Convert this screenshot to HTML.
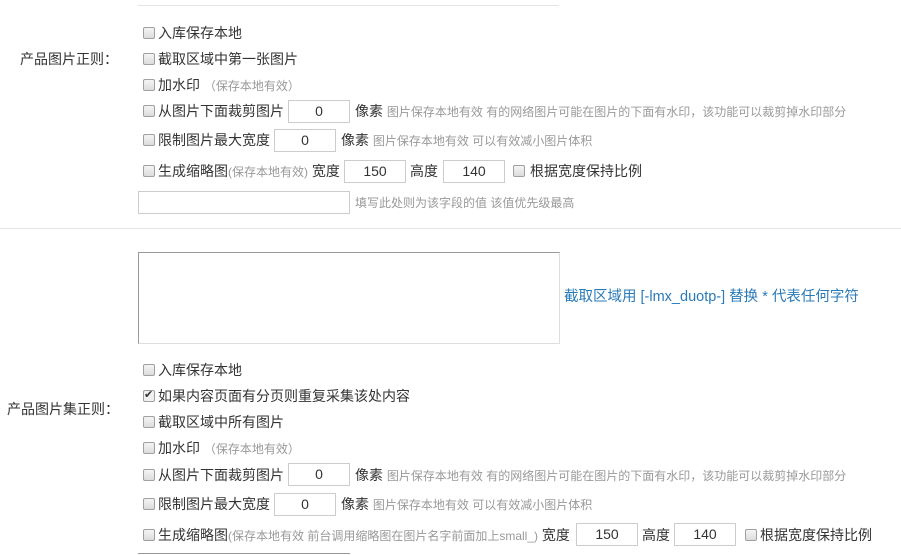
<!DOCTYPE html>
<html><head><meta charset="utf-8"><style>
body{margin:0;width:901px;height:555px;background:#fff;overflow:hidden;position:relative;font-family:"Liberation Sans","Microsoft YaHei","Noto Sans CJK SC",sans-serif;font-size:14px;color:#333}
.a{position:absolute;white-space:nowrap;line-height:16px}
.cb{position:absolute;width:10px;height:10px;border:1px solid #a0a0a0;border-radius:2px;background:linear-gradient(#f4f4f4,#dcdcdc)}
.in{position:absolute;height:23px;border:1px solid #ccc;box-sizing:border-box;text-align:center;line-height:21px;font-size:14px;color:#333;background:#fff}
.h{color:#999;font-size:12px}
.bl{color:#2a7ab8;font-size:14.5px}
</style></head><body>
<div style="position:absolute;left:138px;top:5px;width:421px;height:1px;background:#e4e4e4"></div>

<div class="a" style="left:20px;top:51px">产品图片正则：</div>
<div class="cb" style="left:143px;top:27px"></div><div class="a" style="left:158px;top:25px">入库保存本地</div>
<div class="cb" style="left:143px;top:53px"></div><div class="a" style="left:158px;top:51px">截取区域中第一张图片</div>
<div class="cb" style="left:143px;top:79px"></div><div class="a" style="left:158px;top:77px">加水印 <span class="h">（保存本地有效）</span></div>
<div class="cb" style="left:143px;top:105px"></div><div class="a" style="left:158px;top:103px">从图片下面裁剪图片</div>
<div class="in" style="left:288px;top:100px;width:62px">0</div>
<div class="a" style="left:355px;top:103px">像素 <span class="h">图片保存本地有效 有的网络图片可能在图片的下面有水印，该功能可以裁剪掉水印部分</span></div>
<div class="cb" style="left:143px;top:134px"></div><div class="a" style="left:158px;top:132px">限制图片最大宽度</div>
<div class="in" style="left:274px;top:129px;width:62px">0</div>
<div class="a" style="left:341px;top:132px">像素 <span class="h">图片保存本地有效 可以有效减小图片体积</span></div>
<div class="cb" style="left:143px;top:165px"></div><div class="a" style="left:158px;top:163px">生成缩略图<span class="h">(保存本地有效)</span> 宽度</div>
<div class="in" style="left:344px;top:160px;width:62px">150</div>
<div class="a" style="left:410px;top:163px">高度</div>
<div class="in" style="left:443px;top:160px;width:62px">140</div>
<div class="cb" style="left:513px;top:165px"></div><div class="a" style="left:530px;top:163px">根据宽度保持比例</div>
<div class="in" style="left:138px;top:191px;width:212px"></div>
<div class="a h" style="left:355px;top:195px">填写此处则为该字段的值 该值优先级最高</div>

<div style="position:absolute;left:0;top:228px;width:901px;height:1px;background:#e2e2e2"></div>

<div style="position:absolute;left:138px;top:252px;width:422px;height:92px;box-sizing:border-box;border:1px solid #ddd;border-top-color:#999;border-left-color:#999"></div>
<div class="a bl" style="left:564px;top:289px">截取区域用 [-lmx_duotp-] 替换 * 代表任何字符</div>

<div class="a" style="left:7px;top:401px">产品图片集正则：</div>
<div class="cb" style="left:143px;top:364px"></div><div class="a" style="left:158px;top:362px">入库保存本地</div>
<div class="cb" style="left:143px;top:390px;background:#f0f0f0"></div><div class="a" style="left:144px;top:387px;font-size:11px;color:#333">✔</div><div class="a" style="left:158px;top:388px">如果内容页面有分页则重复采集该处内容</div>
<div class="cb" style="left:143px;top:416px"></div><div class="a" style="left:158px;top:414px">截取区域中所有图片</div>
<div class="cb" style="left:143px;top:442px"></div><div class="a" style="left:158px;top:440px">加水印 <span class="h">（保存本地有效）</span></div>
<div class="cb" style="left:143px;top:469px"></div><div class="a" style="left:158px;top:467px">从图片下面裁剪图片</div>
<div class="in" style="left:288px;top:463px;width:62px">0</div>
<div class="a" style="left:355px;top:467px">像素 <span class="h">图片保存本地有效 有的网络图片可能在图片的下面有水印，该功能可以裁剪掉水印部分</span></div>
<div class="cb" style="left:143px;top:498px"></div><div class="a" style="left:158px;top:496px">限制图片最大宽度</div>
<div class="in" style="left:274px;top:493px;width:62px">0</div>
<div class="a" style="left:341px;top:496px">像素 <span class="h">图片保存本地有效 可以有效减小图片体积</span></div>
<div class="cb" style="left:143px;top:529px"></div><div class="a" style="left:158px;top:527px">生成缩略图<span class="h">(保存本地有效 前台调用缩略图在图片名字前面加上small_)</span> 宽度</div>
<div class="in" style="left:576px;top:523px;width:62px">150</div>
<div class="a" style="left:642px;top:527px">高度</div>
<div class="in" style="left:674px;top:523px;width:62px">140</div>
<div class="cb" style="left:745px;top:529px"></div><div class="a" style="left:760px;top:527px">根据宽度保持比例</div>
<div style="position:absolute;left:138px;top:553px;width:212px;height:1px;background:#999"></div>
</body></html>
